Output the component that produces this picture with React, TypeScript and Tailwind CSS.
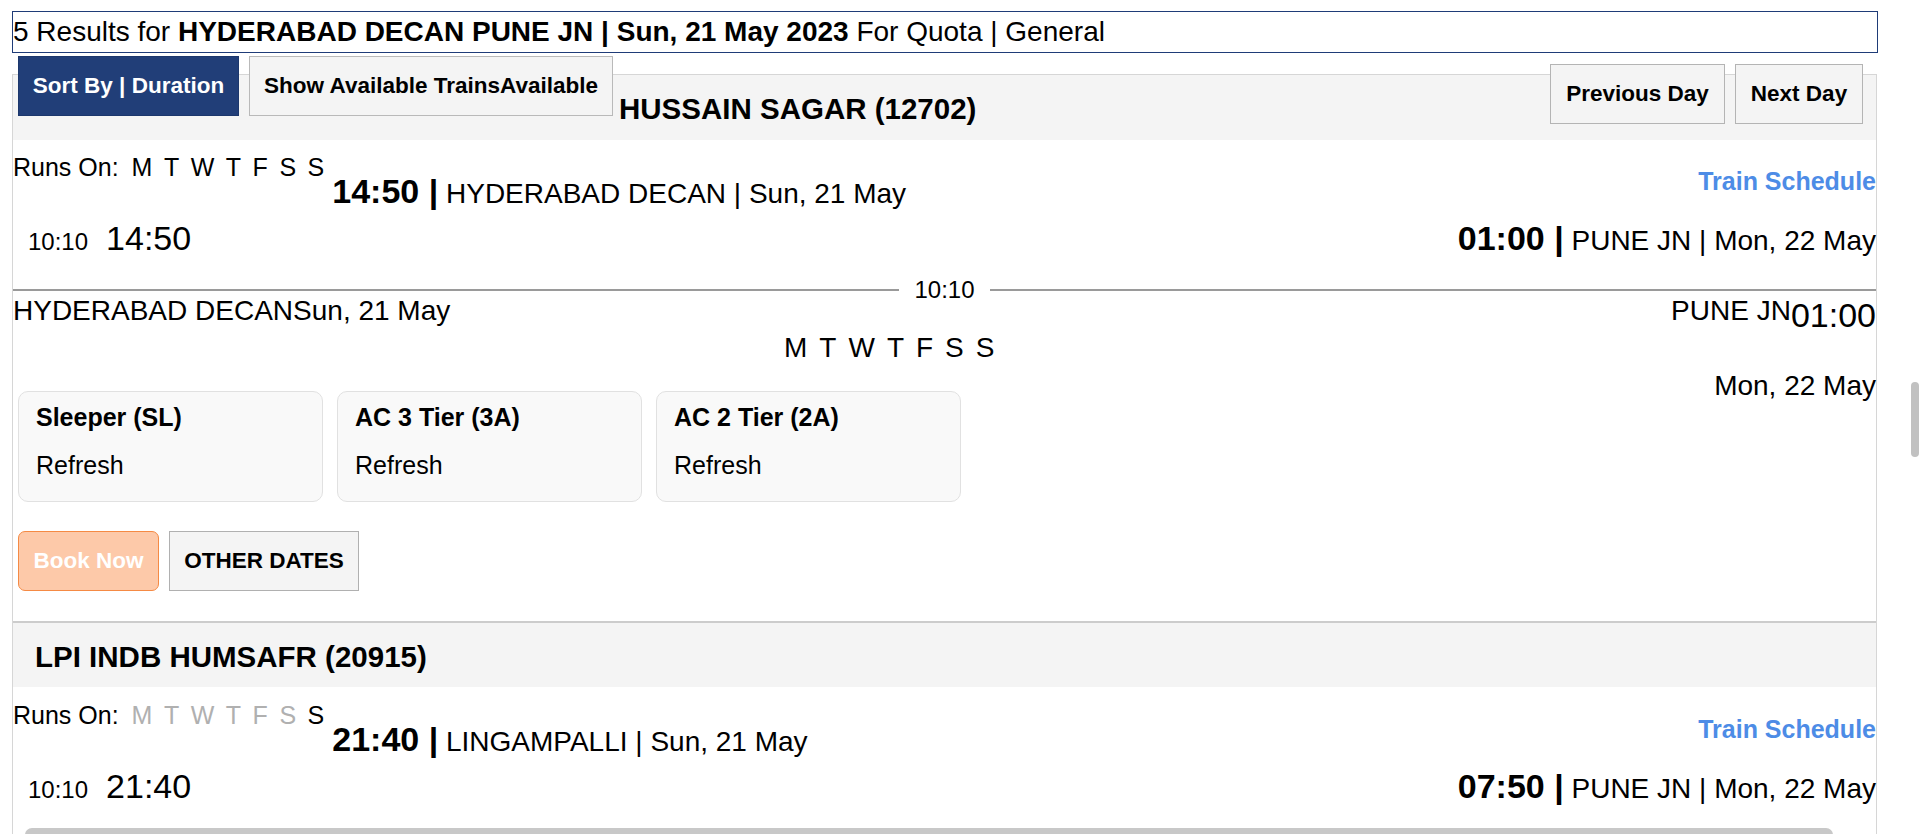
import React from 'react';

interface Train {
  name: string;
  number: string;
  runsOn: boolean[];
  depTime: string;
  depStation: string;
  depDate: string;
  arrTime: string;
  arrStation: string;
  arrDate: string;
  duration: string;
  bodyTop: string;
}

const DAYS = ['M', 'T', 'W', 'T', 'F', 'S', 'S'];
const CLASSES = ['Sleeper (SL)', 'AC 3 Tier (3A)', 'AC 2 Tier (2A)'];

const trains: Train[] = [
  {
    name: 'HUSSAIN SAGAR',
    number: '12702',
    runsOn: [true, true, true, true, true, true, true],
    depTime: '14:50',
    depStation: 'HYDERABAD DECAN',
    depDate: 'Sun, 21 May',
    arrTime: '01:00',
    arrStation: 'PUNE JN',
    arrDate: 'Mon, 22 May',
    duration: '10:10',
    bodyTop: 'mt-[15px]',
  },
  {
    name: 'LPI INDB HUMSAFR',
    number: '20915',
    runsOn: [false, false, false, false, false, false, true],
    depTime: '21:40',
    depStation: 'LINGAMPALLI',
    depDate: 'Sun, 21 May',
    arrTime: '07:50',
    arrStation: 'PUNE JN',
    arrDate: 'Mon, 22 May',
    duration: '10:10',
    bodyTop: 'mt-[16px]',
  },
];

const btnBase = 'flex h-[60px] items-center justify-center font-bold leading-none text-[22.5px]';

const TrainCard: React.FC<{ train: Train; first?: boolean }> = ({ train, first = false }) => {
  return (
    <div className="border-x border-[#d6d6d6] mr-[1px]">
      {/* header band */}
      {first ? (
        <div className="flex h-[66px] items-start border-t border-[#d6d6d6] bg-[#f4f4f4]">
          <div className="ml-[5px] -mt-[19px] flex gap-[10px]">
            <button className={`${btnBase} w-[221px] border border-[#1c376c] bg-[#213e78] text-white`}>
              Sort By | Duration
            </button>
            <button className={`${btnBase} w-[364px] border border-[#b9b9b9] bg-[#f4f4f4] text-black`}>
              Show Available TrainsAvailable
            </button>
          </div>
          <div className="ml-[6px] mt-[19px] text-[29.5px] font-bold leading-none">
            {train.name} ({train.number})
          </div>
          <div className="flex-1" />
          <div className="mr-[13px] -mt-[11px] flex gap-[10px]">
            <button className={`${btnBase} w-[175px] border border-[#b4b4b4] bg-[#f4f4f4] text-black`}>
              Previous Day
            </button>
            <button className={`${btnBase} w-[128px] border border-[#b4b4b4] bg-[#f4f4f4] text-black`}>
              Next Day
            </button>
          </div>
        </div>
      ) : (
        <div className="flex h-[66px] items-start border-t-2 border-[#cccccc] bg-[#f4f4f4]">
          <div className="ml-[22px] mt-[19px] text-[29.5px] font-bold leading-none">
            {train.name} ({train.number})
          </div>
        </div>
      )}

      {/* runs on + departure */}
      <div className={`${train.bodyTop} flex items-start justify-between`}>
        <div className="flex items-start">
          <div className="flex items-center text-[25px] leading-none">
            <span>Runs On:</span>
            <div className="ml-[13px] flex gap-[11.5px]">
              {DAYS.map((d, i) => (
                <span key={i} className={train.runsOn[i] ? 'text-black' : 'text-[#b0b0b0]'}>
                  {d}
                </span>
              ))}
            </div>
          </div>
          <div className="ml-[8px] mt-[19px] whitespace-nowrap text-[34px] font-bold leading-none">
            {train.depTime} |
            <span className="text-[28px] font-normal">
              {' '}
              {train.depStation} | {train.depDate}
            </span>
          </div>
        </div>
        <div className="mt-[14px] text-[25px] font-bold leading-none text-[#4d8ce6]">Train Schedule</div>
      </div>

      <div className="mt-[13px] flex items-baseline justify-between">
        <div className="flex items-baseline pl-[15px] leading-none">
          <span className="text-[24px]">{train.duration}</span>
          <span className="ml-[18px] text-[34px]">{train.depTime}</span>
        </div>
        <div className="whitespace-nowrap text-[34px] font-bold leading-none">
          {train.arrTime} |
          <span className="text-[28px] font-normal">
            {' '}
            {train.arrStation} | {train.arrDate}
          </span>
        </div>
      </div>

      {/* duration divider */}
      <div className="mt-[28px] flex h-[14px] items-center">
        <div className="h-[2px] flex-1 bg-[#9a9a9a]" />
        <span className="px-[15px] text-[24px] leading-[14px]">{train.duration}</span>
        <div className="h-[2px] flex-1 bg-[#9a9a9a]" />
      </div>

      <div className="flex justify-between pb-[30px]">
        <div className="flex-1">
          <div className="text-[28px] leading-none">
            {train.depStation}
            {train.depDate}
          </div>
          <div className="ml-[771px] mt-[9px] flex gap-[12px] text-[28px] leading-none">
            {DAYS.map((d, i) => (
              <span key={i}>{d}</span>
            ))}
          </div>
          <div className="ml-[5px] mt-[29px] flex gap-[14px]">
            {CLASSES.map((c) => (
              <div
                key={c}
                className="h-[111px] w-[305px] rounded-[10px] border border-[#e1e1e1] bg-[#f9f9f9] pl-[17px] pt-[13px] text-[25px] leading-none"
              >
                <div className="font-bold">{c}</div>
                <div className="mt-[23px]">Refresh</div>
              </div>
            ))}
          </div>
          <div className="ml-[5px] mt-[29px] flex gap-[10px]">
            <button className={`${btnBase} w-[141px] rounded-[7px] border border-[#f58a44] bg-[#fdc9a9] text-white`}>
              Book Now
            </button>
            <button className={`${btnBase} w-[190px] border border-[#b0b0b0] bg-[#f4f4f4] text-black`}>
              OTHER DATES
            </button>
          </div>
        </div>
        <div className="flex flex-col items-end">
          <div className="flex items-start leading-none">
            <span className="text-[28px]">{train.arrStation}</span>
            <span className="mt-[1px] text-[34px]">{train.arrTime}</span>
          </div>
          <div className="mt-[40px] text-[28px] leading-none">{train.arrDate}</div>
        </div>
      </div>
    </div>
  );
};

export default function App() {
  return (
    <div className="relative h-[834px] w-[1920px] overflow-hidden bg-white font-['Liberation_Sans',Arial,sans-serif] text-black">
      <div className="ml-[12px] w-[1866px] pt-[11px]">
        <div className="flex h-[42px] items-center border border-[#1f3c78] text-[28px] leading-none">
          <span>
            5 Results for <span className="font-bold">HYDERABAD DECAN PUNE JN | Sun, 21 May 2023</span> For Quota |
            General
          </span>
        </div>

        <div className="mt-[21px]">
          {trains.map((t, i) => (
            <TrainCard key={t.number} train={t} first={i === 0} />
          ))}
        </div>
      </div>

      {/* overlay scrollbars */}
      <div className="absolute left-[1911px] top-[382px] h-[75px] w-[8px] rounded-full bg-[#c1c1c1]" />
      <div className="absolute left-[25px] top-[828px] h-[14px] w-[1808px] rounded-full bg-[#c8c8c8]" />
    </div>
  );
}
